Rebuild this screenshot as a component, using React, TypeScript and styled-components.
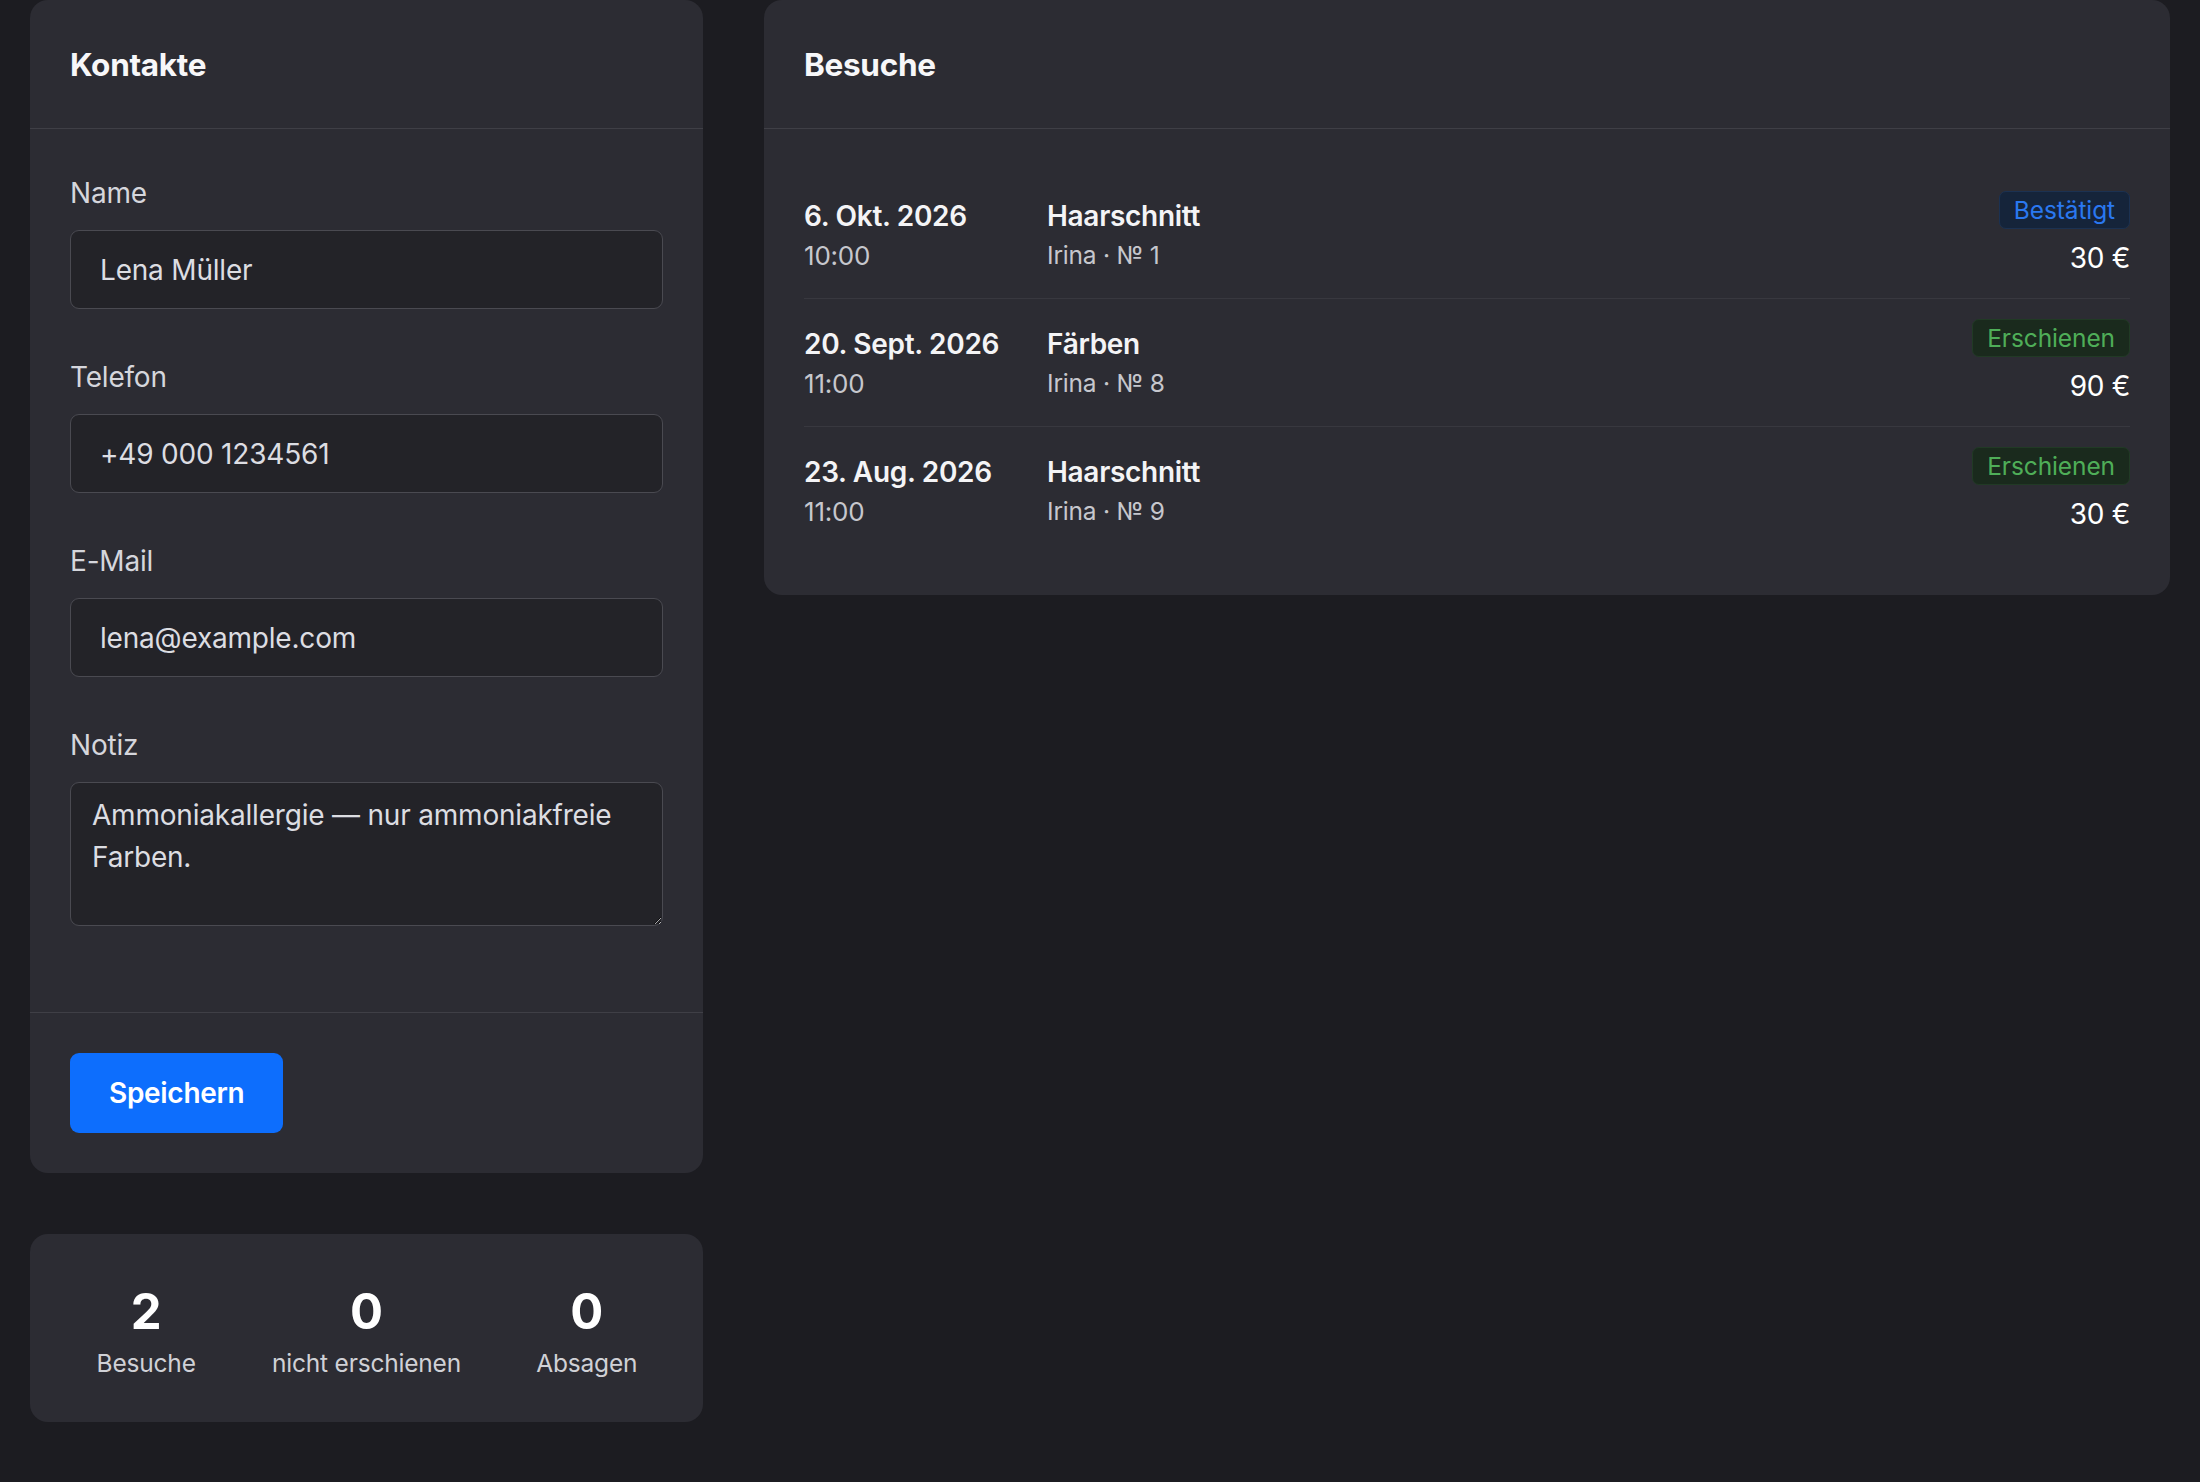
import React from "react";
import styled, { createGlobalStyle } from "styled-components";

const GlobalStyle = createGlobalStyle`
  html, body {
    margin: 0;
    padding: 0;
    background: #1c1c21;
  }
  body {
    font-family: Inter, "Liberation Sans", sans-serif;
    color: #e4e4e9;
    -webkit-font-smoothing: antialiased;
  }
  *, *::before, *::after {
    box-sizing: border-box;
  }
`;

const Page = styled.main`
  display: grid;
  grid-template-columns: 673px 1fr;
  column-gap: 61px;
  align-items: start;
  padding: 0 30px 60px;
  min-height: 1482px;
`;

const Column = styled.div`
  display: flex;
  flex-direction: column;
  gap: 61px;
`;

const Card = styled.section`
  background: #2c2c33;
  border-radius: 18px;
  overflow: hidden;
`;

const CardHeader = styled.header`
  padding: 46px 40px 44px;
  border-bottom: 1px solid #3f3f46;
`;

const Title = styled.h2`
  margin: 0;
  font-size: 31.5px;
  line-height: 38px;
  font-weight: 700;
  color: #f7f7f9;
  letter-spacing: -0.3px;
`;

const FormBody = styled.div`
  padding: 43px 40px 39px;
  border-bottom: 1px solid #3f3f46;
`;

const Field = styled.div`
  margin-bottom: 47px;
`;

const Label = styled.label`
  display: block;
  font-size: 28px;
  line-height: 42px;
  margin-bottom: 16px;
  color: #d5d6dc;
  letter-spacing: -0.2px;
`;

const TextInput = styled.input`
  display: block;
  width: 100%;
  height: 79px;
  padding: 0 29px;
  font-family: inherit;
  font-size: 28px;
  line-height: 42px;
  color: #dcdde2;
  background: #232328;
  border: 1px solid #4a4a51;
  border-radius: 9px;
  outline: none;
  letter-spacing: -0.2px;
`;

const TextArea = styled.textarea`
  display: block;
  width: 100%;
  height: 144px;
  padding: 11px 21px 5px;
  font-family: inherit;
  font-size: 28px;
  line-height: 42px;
  color: #dcdde2;
  background: #232328;
  border: 1px solid #4a4a51;
  border-radius: 9px;
  outline: none;
  resize: vertical;
  color-scheme: dark;
  letter-spacing: -0.2px;
`;

const Footer = styled.div`
  padding: 40px 40px 40px;
`;

const PrimaryButton = styled.button`
  height: 80px;
  padding: 0 39px;
  font-family: inherit;
  font-size: 28px;
  font-weight: 600;
  color: #ffffff;
  background: #0d6efd;
  border: none;
  border-radius: 9px;
  cursor: pointer;
  letter-spacing: -0.3px;
`;

const StatsGrid = styled.div`
  display: grid;
  grid-template-columns: repeat(3, 1fr);
  padding: 48px 6px 40px;
`;

const Stat = styled.div`
  text-align: center;
`;

const StatValue = styled.div`
  font-size: 49px;
  line-height: 59px;
  font-weight: 700;
  color: #ffffff;
`;

const StatLabel = styled.div`
  margin-top: 4px;
  font-size: 24.5px;
  line-height: 37px;
  color: #d0d1d6;
  letter-spacing: -0.2px;
`;

const ListBody = styled.div`
  padding: 42px 40px 41px;
`;

const VisitRow = styled.div`
  display: grid;
  grid-template-columns: 243px 1fr auto;
  align-items: center;
  padding: 19.5px 0;
  border-bottom: 1px solid #38383f;

  &:last-child {
    border-bottom: none;
  }
`;

const Stack = styled.div`
  display: flex;
  flex-direction: column;
`;

const Primary = styled.span`
  font-size: 28px;
  line-height: 42px;
  font-weight: 600;
  color: #f4f4f6;
  letter-spacing: -0.3px;
`;

const Secondary = styled.span<{ $size: number }>`
  font-size: ${(p) => p.$size}px;
  line-height: 37px;
  color: #c6c7cd;
  letter-spacing: -0.2px;
`;

const RightCol = styled.div`
  display: flex;
  flex-direction: column;
  align-items: flex-end;
`;

const Badge = styled.span<{ $tone: "blue" | "green" }>`
  display: inline-block;
  padding: 4px 14px;
  font-size: 24.5px;
  line-height: 28px;
  border-radius: 7px;
  margin-bottom: 8px;
  letter-spacing: -0.1px;
  color: ${(p) => (p.$tone === "blue" ? "#2a78f0" : "#4fae58")};
  background: ${(p) => (p.$tone === "blue" ? "#15243a" : "#1a2a1d")};
  border: 1px solid ${(p) => (p.$tone === "blue" ? "#1b3151" : "#213a25")};
`;

const Price = styled.span`
  font-size: 28px;
  line-height: 42px;
  font-weight: 400;
  color: #ffffff;
  letter-spacing: -0.3px;
`;

type Visit = {
  date: string;
  time: string;
  service: string;
  staff: string;
  status: string;
  tone: "blue" | "green";
  price: string;
};

const visits: Visit[] = [
  { date: "6. Okt. 2026", time: "10:00", service: "Haarschnitt", staff: "Irina · № 1", status: "Bestätigt", tone: "blue", price: "30 €" },
  { date: "20. Sept. 2026", time: "11:00", service: "Färben", staff: "Irina · № 8", status: "Erschienen", tone: "green", price: "90 €" },
  { date: "23. Aug. 2026", time: "11:00", service: "Haarschnitt", staff: "Irina · № 9", status: "Erschienen", tone: "green", price: "30 €" },
];

const stats = [
  { value: "2", label: "Besuche" },
  { value: "0", label: "nicht erschienen" },
  { value: "0", label: "Absagen" },
];

export default function App() {
  return (
    <>
      <GlobalStyle />
      <Page>
        <Column>
          <Card>
            <CardHeader>
              <Title>Kontakte</Title>
            </CardHeader>
            <FormBody>
              <Field>
                <Label htmlFor="name">Name</Label>
                <TextInput id="name" defaultValue="Lena Müller" />
              </Field>
              <Field>
                <Label htmlFor="tel">Telefon</Label>
                <TextInput id="tel" defaultValue="+49 000 1234561" />
              </Field>
              <Field>
                <Label htmlFor="mail">E-Mail</Label>
                <TextInput id="mail" defaultValue="lena@example.com" />
              </Field>
              <Field>
                <Label htmlFor="note">Notiz</Label>
                <TextArea id="note" rows={3} defaultValue="Ammoniakallergie — nur ammoniakfreie Farben." />
              </Field>
            </FormBody>
            <Footer>
              <PrimaryButton type="button">Speichern</PrimaryButton>
            </Footer>
          </Card>
          <Card>
            <StatsGrid>
              {stats.map((s) => (
                <Stat key={s.label}>
                  <StatValue>{s.value}</StatValue>
                  <StatLabel>{s.label}</StatLabel>
                </Stat>
              ))}
            </StatsGrid>
          </Card>
        </Column>
        <Card>
          <CardHeader>
            <Title>Besuche</Title>
          </CardHeader>
          <ListBody>
            {visits.map((v) => (
              <VisitRow key={v.date}>
                <Stack>
                  <Primary>{v.date}</Primary>
                  <Secondary $size={26}>{v.time}</Secondary>
                </Stack>
                <Stack>
                  <Primary>{v.service}</Primary>
                  <Secondary $size={24.5}>{v.staff}</Secondary>
                </Stack>
                <RightCol>
                  <Badge $tone={v.tone}>{v.status}</Badge>
                  <Price>{v.price}</Price>
                </RightCol>
              </VisitRow>
            ))}
          </ListBody>
        </Card>
      </Page>
    </>
  );
}
